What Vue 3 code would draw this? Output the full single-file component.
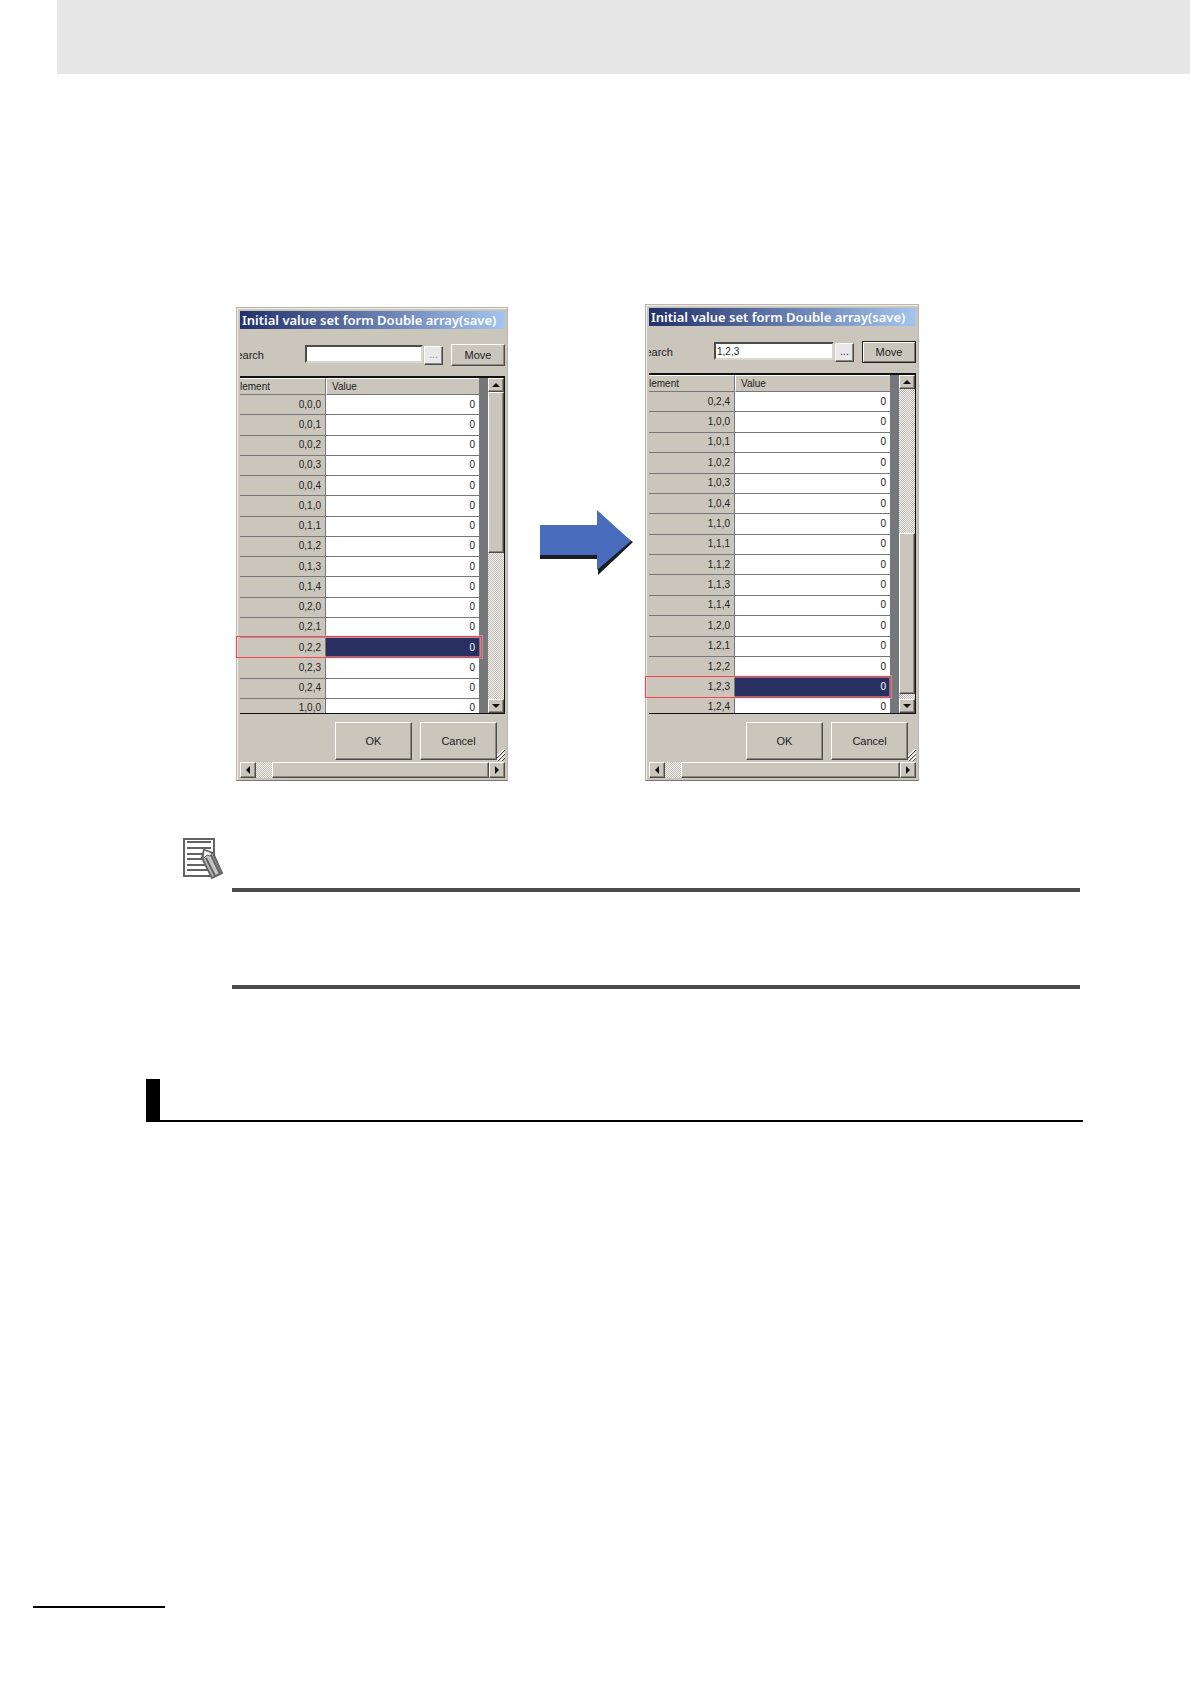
<template>
  <div class="page">
    <header class="page-header"></header>

    <main>
      <section class="figure">
        <template v-for="(form, index) in forms" :key="form.id">
          <svg
            v-if="index > 0"
            class="arrow"
            width="93"
            height="66"
            viewBox="0 0 93 66"
            aria-hidden="true"
          >
            <path d="M0 18H58V4L90 30L93 32L58 65V49H0Z" fill="#1b1b20" />
            <path d="M0 15H57V0L91 31L57 60V45H0Z" fill="#4a6cbd" />
          </svg>

          <form class="window" :class="form.id" @submit.prevent>
            <div class="title-bar">Initial value set form Double array(save)</div>

            <div class="search-row">
              <label :for="form.id + '-search'"><span>earch</span></label>
              <input :id="form.id + '-search'" v-model="form.search" type="text" />
              <button type="button" class="browse-btn" :class="{ dim: !form.search }">
                ...
              </button>
              <button type="button" class="move-btn" :class="{ focused: form.search }">
                Move
              </button>
            </div>

            <div class="list">
              <div class="table-clip">
                <table>
                  <thead>
                    <tr>
                      <th class="element">lement</th>
                      <th class="value">Value</th>
                    </tr>
                  </thead>
                  <tbody>
                    <tr
                      v-for="row in form.rows"
                      :key="row"
                      :class="{ selected: row === form.selected }"
                    >
                      <td class="element">{{ row }}</td>
                      <td class="value">0</td>
                    </tr>
                  </tbody>
                </table>
              </div>
              <div class="strip"></div>
              <div class="v-scroll">
                <button type="button" class="scroll-btn" aria-label="Up">
                  <svg width="8" height="4" viewBox="0 0 8 4"><path d="M0 4L4 0L8 4Z" /></svg>
                </button>
                <div class="track" :style="{ height: form.scrollTop + 'px' }"></div>
                <div class="thumb"></div>
                <div class="track rest"></div>
                <button type="button" class="scroll-btn" aria-label="Down">
                  <svg width="8" height="4" viewBox="0 0 8 4"><path d="M0 0H8L4 4Z" /></svg>
                </button>
              </div>
            </div>

            <div class="actions">
              <button type="button">OK</button>
              <button type="button">Cancel</button>
              <svg class="grip" width="8" height="12" viewBox="0 0 8 12">
                <path d="M0 8L8 0M0 12L8 4M4 12L8 8" stroke="#fff" stroke-width="2" />
                <path d="M0 9L8 1M1 12L8 5M5 12L8 9" stroke="#444" stroke-width="1" />
              </svg>
            </div>

            <div class="h-scroll">
              <button type="button" class="scroll-btn" aria-label="Left">
                <svg width="4" height="8" viewBox="0 0 4 8"><path d="M4 0V8L0 4Z" /></svg>
              </button>
              <div class="track"></div>
              <div class="thumb"></div>
              <button type="button" class="scroll-btn" aria-label="Right">
                <svg width="4" height="8" viewBox="0 0 4 8"><path d="M0 0V8L4 4Z" /></svg>
              </button>
            </div>

            <div class="marker" :style="{ top: form.markerTop + 'px' }"></div>
          </form>
        </template>
      </section>

      <section class="note">
        <svg class="note-icon" width="41" height="42" viewBox="0 0 41 42" aria-hidden="true">
          <rect x="1" y="1" width="30" height="37" fill="#fff" stroke="#636363" stroke-width="2" />
          <path
            d="M4 4H28M4 10H28M4 16H21M4 21H21M4 27H24M4 32H26"
            stroke="#636363"
            stroke-width="2"
          />
          <path
            d="M21 12L30 15L39 35L29 40L19 20Z"
            fill="#c4c4c4"
            stroke="#636363"
            stroke-width="2"
          />
          <path d="M21 12L29 15L27 18L24 17L20 21Z" fill="#fff" stroke="#636363" />
          <path d="M23 20L32 38M28 17L37 36" stroke="#636363" stroke-width="2" />
          <path d="M21 21L30 39" stroke="#a8a8a8" />
        </svg>
        <div class="note-body"></div>
      </section>

      <div class="section-heading"></div>
    </main>

    <footer class="page-footer"></footer>
  </div>
</template>

<script setup>
import { ref } from "vue";

// All element indexes of the 2 x 3 x 5 array
const elements = [];
for (let i = 0; i < 2; i++) {
  for (let j = 0; j < 3; j++) {
    for (let k = 0; k < 5; k++) {
      elements.push(`${i},${j},${k}`);
    }
  }
}

const forms = ref([
  {
    id: "before",
    search: "",
    rows: elements.slice(0, 16),
    selected: "0,2,2",
    scrollTop: 0,
    markerTop: 328,
  },
  {
    id: "after",
    search: "1,2,3",
    rows: elements.slice(14, 30),
    selected: "1,2,3",
    scrollTop: 144,
    markerTop: 371,
  },
]);
</script>

<style>
body {
  margin: 0;
  background-color: #fff;
}
</style>

<style scoped>
.page {
  min-height: 100vh;
  display: flex;
  flex-direction: column;
  font-family: "Liberation Sans", Arial, sans-serif;
  font-size: 11px;
  color: #222;
  box-sizing: border-box;
  padding-bottom: 76px;
}

.page * {
  box-sizing: border-box;
}

.page-header {
  height: 74px;
  margin-left: 57px;
  background-color: #e6e6e6;
}

main {
  flex: 1;
}

.figure {
  display: flex;
  align-items: flex-end;
  padding: 230px 0 0 236px;
}

.arrow {
  flex: none;
  align-self: center;
  margin: 0 12px 0 32px;
}

.window {
  position: relative;
  flex: none;
  width: 272px;
  padding: 3px 2px 2px 3px;
  background-color: #cac6bc;
  border: 1px solid #b8b5ae;
  border-bottom-color: #77756f;
  box-shadow: inset 1px 1px #f1efea;
}

.window.after {
  width: 274px;
}

.title-bar {
  height: 18px;
  padding-left: 2px;
  overflow: hidden;
  background: linear-gradient(to right, #23306b, #a3c4ee);
  color: #fff;
  font-family: "Noto Sans", sans-serif;
  font-size: 13px;
  font-weight: 600;
  line-height: 18px;
  white-space: nowrap;
}

button {
  padding: 0;
  background-color: #cac6bc;
  border: 1px solid;
  border-color: #fff #4c4b48 #4c4b48 #fff;
  box-shadow: inset -1px -1px #8b8881;
  color: #222;
  font: inherit;
}

.search-row {
  display: flex;
  align-items: center;
  height: 47px;
  padding: 15px 0 10px;
}

.search-row label {
  flex: none;
  display: flex;
  justify-content: flex-end;
  width: 24px;
  margin-right: 41px;
  overflow: hidden;
}

.search-row input {
  flex: 1;
  min-width: 0;
  height: 18px;
  margin-bottom: 2px;
  padding: 0 1px;
  border: 2px solid;
  border-color: #4c4b48 #d9d6cf #d9d6cf #4c4b48;
  background-color: #fff;
  color: #222;
  font: inherit;
  font-size: 10px;
  line-height: 14px;
}

.browse-btn {
  width: 19px;
  height: 19px;
  margin: 0 8px 0 1px;
  background-color: #e9e8e8;
  font-size: 10px;
  line-height: 12px;
}

.browse-btn.dim {
  color: #888;
}

.move-btn {
  width: 54px;
  height: 22px;
}

.move-btn.focused {
  border-color: #222;
  box-shadow:
    inset 1px 1px #fff,
    inset -1px -1px #77756f;
}

.list {
  display: flex;
  height: 338px;
  border: solid #111;
  border-width: 2px 1px 1px 0;
}

.after .list {
  height: 341px;
}

.table-clip {
  flex: 1;
  overflow: hidden;
}

table {
  width: 100%;
  height: 341px;
  border-collapse: separate;
  border-spacing: 0;
  table-layout: fixed;
  font-size: 10px;
  line-height: 12px;
}

.after table {
  height: 343px;
}

th,
td {
  padding: 0;
  border-bottom: 1px solid #76777a;
  font-weight: normal;
}

th {
  height: 17px;
  border-top: 1px solid #fff;
  text-align: left;
}

.element {
  width: 86px;
  background-color: #cac6bc;
  border-right: 1px solid #76777a;
}

td.element {
  padding-right: 4px;
  text-align: right;
}

th.value {
  padding-left: 5px;
  border-left: 1px solid #fff;
}

td.value {
  padding-right: 4px;
  background-color: #fff;
  text-align: right;
}

.selected .value {
  background-color: #2a2f61;
  color: #fff;
}

.strip {
  width: 9px;
  background-color: #76777a;
}

.v-scroll {
  display: flex;
  flex-direction: column;
  width: 16px;
}

.scroll-btn {
  flex: none;
  display: flex;
  align-items: center;
  justify-content: center;
}

.scroll-btn path {
  fill: #111;
}

.v-scroll .scroll-btn {
  height: 14px;
}

.track {
  background: repeating-conic-gradient(#c0bdb6 0 25%, #f2f1ee 0 50%) 0 0 / 2px 2px;
}

.track.rest {
  flex: 1;
}

.thumb {
  background-color: #cac6bc;
  border: 1px solid;
  border-color: #fff #4c4b48 #4c4b48 #fff;
  box-shadow: inset -1px -1px #8b8881;
}

.v-scroll .thumb {
  height: 161px;
}

.actions {
  display: flex;
  justify-content: flex-end;
  height: 48px;
  padding-top: 8px;
}

.actions button {
  width: 77px;
  height: 38px;
}

.actions button + button {
  margin-left: 8px;
}

.grip {
  align-self: flex-end;
  margin-bottom: 1px;
}

.h-scroll {
  display: flex;
  height: 16px;
}

.h-scroll .scroll-btn {
  width: 16px;
}

.h-scroll .track {
  width: 16px;
}

.h-scroll .thumb {
  flex: 1;
}

/* Red frame around the selected row */
.marker {
  position: absolute;
  left: -1px;
  width: 246px;
  height: 22px;
  border: 1px solid #d5505c;
  box-shadow:
    0 0 0 1px rgba(255, 190, 190, 0.4),
    inset 0 0 0 1px rgba(255, 170, 170, 0.5);
}

.note {
  padding: 57px 110px 0 183px;
}

.note-icon {
  display: block;
}

.note-body {
  height: 101px;
  margin: 8px 0 0 49px;
  border: solid #4b4b4b;
  border-width: 4px 0;
}

.section-heading {
  height: 43px;
  margin: 90px 107px 0 146px;
  border-left: 14px solid #000;
  background: linear-gradient(#000, #000) bottom / 100% 2px no-repeat;
}

.page-footer {
  width: 132px;
  height: 2px;
  margin-left: 33px;
  background-color: #000;
}
</style>
